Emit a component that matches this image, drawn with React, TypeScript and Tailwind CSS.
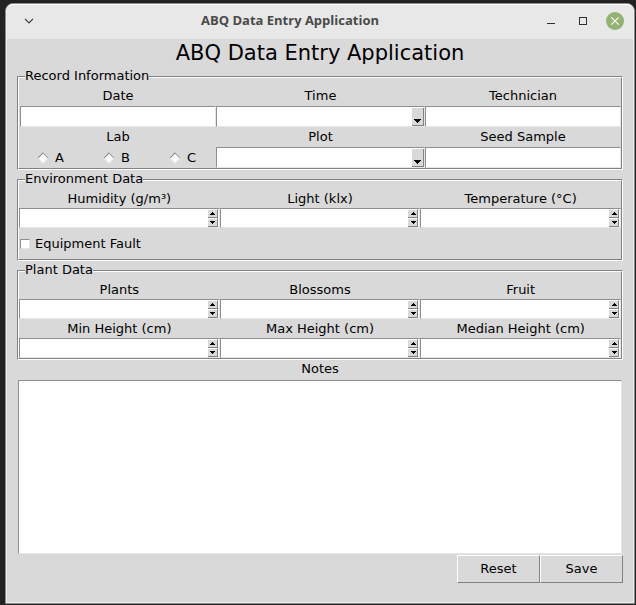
import { useId, useState } from "react";
import type { ReactNode } from "react";

const sunken =
  "border border-t-[#8f8f8f] border-l-[#8f8f8f] border-r-[#e6e6e6] border-b-[#e6e6e6] bg-white";
const raised =
  "border border-t-white border-l-white border-r-[#828282] border-b-[#828282]";

function Group({ title, children }: { title: string; children: ReactNode }) {
  return (
    <fieldset className="min-w-0 border border-t-[#828282] border-l-[#828282] border-r-white border-b-white">
      <legend className="relative z-10 ml-[7px] h-[17px] bg-[#d9d9d9] leading-[15px]">{title}</legend>
      <div className="-mt-2 border border-t-white border-l-white border-r-[#828282] border-b-[#828282] pt-2">
        {children}
      </div>
    </fieldset>
  );
}

function TextField({ label }: { label: string }) {
  const id = useId();
  return (
    <div className="min-w-0">
      <label htmlFor={id} className="block text-center leading-5">
        {label}
      </label>
      <input id={id} type="text" className={`block h-[21px] w-full px-1 outline-none ${sunken}`} />
    </div>
  );
}

function ComboField({ label, options }: { label: string; options: string[] }) {
  const id = useId();
  return (
    <div className="min-w-0">
      <label htmlFor={id} className="block text-center leading-5">
        {label}
      </label>
      <div className="relative">
        <select
          id={id}
          defaultValue=""
          className={`block h-[21px] w-full appearance-none px-1 outline-none ${sunken}`}
        >
          <option value=""></option>
          {options.map((o) => (
            <option key={o}>{o}</option>
          ))}
        </select>
        <span className="pointer-events-none absolute top-0.5 right-px bottom-px flex w-3 items-end justify-center border-r border-b border-[#828282] bg-[#d9d9d9] pb-0.5">
          <svg width="7" height="4" viewBox="0 0 7 4" shapeRendering="crispEdges">
            <path d="M0 0H7V1H6V2H5V3H4V4H3V3H2V2H1V1H0Z" />
          </svg>
        </span>
      </div>
    </div>
  );
}

function SpinField({ label, step = 1 }: { label: string; step?: number }) {
  const id = useId();
  const [value, setValue] = useState("");
  const bump = (d: number) => setValue(String(Number(value || 0) + d * step));
  const button =
    "flex h-[9px] w-2.5 items-center justify-center border-t border-r border-b border-t-white border-r-[#828282] border-b-[#828282] bg-[#d9d9d9] pl-px";
  return (
    <div className="min-w-0">
      <label htmlFor={id} className="block text-center leading-[19px]">
        {label}
      </label>
      <div className={`flex h-5 ${sunken}`}>
        <input
          id={id}
          type="text"
          inputMode="decimal"
          value={value}
          onChange={(e) => setValue(e.target.value)}
          className="min-w-0 flex-1 px-1 outline-none"
        />
        <div className="mr-px flex flex-col">
          <button type="button" aria-label={`Increase ${label}`} className={button} onClick={() => bump(1)}>
            <svg width="5" height="3" viewBox="0 0 5 3" shapeRendering="crispEdges">
              <path d="M2 0H3V1H4V2H5V3H0V2H1V1H2Z" />
            </svg>
          </button>
          <button type="button" aria-label={`Decrease ${label}`} className={button} onClick={() => bump(-1)}>
            <svg width="5" height="3" viewBox="0 0 5 3" shapeRendering="crispEdges">
              <path d="M0 0H5V1H4V2H3V3H2V2H1V1H0Z" />
            </svg>
          </button>
        </div>
      </div>
    </div>
  );
}

function LabField() {
  const [lab, setLab] = useState("");
  return (
    <div role="radiogroup" aria-labelledby="lab-label">
      <div id="lab-label" className="text-center leading-5">
        Lab
      </div>
      <div className="grid h-[21px] grid-cols-[66px_66px_1fr] items-center">
        {["A", "B", "C"].map((name) => (
          <label key={name} className="flex items-center gap-2 pl-[19px]">
            <input
              type="radio"
              name="lab"
              checked={lab === name}
              onChange={() => setLab(name)}
              className="size-2 rotate-45 appearance-none border border-t-[#9a9a9a] border-l-[#828282] border-r-[#e6e6e6] border-b-[#e6e6e6] bg-white checked:bg-[#4a6984]"
            />
            {name}
          </label>
        ))}
      </div>
    </div>
  );
}

export default function App() {
  return (
    <div className="flex min-h-screen bg-[#222222] pt-[3px] pr-px pb-px pl-[5px] font-['DejaVu_Sans',sans-serif] text-[13px] text-black">
      <main className="flex min-w-0 flex-1 flex-col rounded-t-lg border border-[#8c8c8c] bg-[#d9d9d9]">
        <header className="flex h-[35px] items-center rounded-t-[7px] border-t border-r border-l border-t-white border-r-[#ececec] border-l-[#ececec] bg-[#e8e8e8] pb-0.5">
          <div className="flex w-[90px] pl-[17px]">
            <button type="button" aria-label="Window menu">
              <svg width="10" height="6" viewBox="0 0 10 6" fill="none" stroke="#3c3c3c" strokeWidth="1.2">
                <path d="M1 .8L5 4.8L9 .8" />
              </svg>
            </button>
          </div>
          <div className="flex-1 text-center font-['Open_Sans',sans-serif] text-[13px] font-bold text-[#4a4a4a]">
            ABQ Data Entry Application
          </div>
          <div className="flex w-[150px] items-center justify-end pr-[9px]">
            <button type="button" aria-label="Minimize" className="mr-6">
              <svg width="8" height="8" viewBox="0 0 8 8" shapeRendering="crispEdges">
                <path d="M0 6H8V7H0Z" fill="#303030" />
              </svg>
            </button>
            <button type="button" aria-label="Maximize" className="mr-[19px]">
              <svg width="8" height="8" viewBox="0 0 8 8" shapeRendering="crispEdges">
                <path d="M.5 .5H7.5V7.5H.5Z" fill="none" stroke="#303030" />
              </svg>
            </button>
            <button type="button" aria-label="Close">
              <svg width="18" height="18" viewBox="0 0 18 18">
                <circle cx="9" cy="9" r="9" fill="#92b372" />
                <path d="M5.3 5.3L12.7 12.7M12.7 5.3L5.3 12.7" stroke="#fff" strokeWidth="1.2" />
              </svg>
            </button>
          </div>
        </header>
        <form
          className="flex flex-1 flex-col border-r border-b border-l border-[#ececec] px-2.5 pb-[19px]"
          onSubmit={(e) => e.preventDefault()}
        >
          <h1 className="h-[29px] text-center text-[21px] leading-7">ABQ Data Entry Application</h1>
          <div className="flex flex-col gap-px">
            <Group title="Record Information">
              <div className="grid grid-cols-[196fr_209fr_196fr] pl-px">
                <TextField label="Date" />
                <ComboField label="Time" options={["8:00", "12:00", "16:00", "20:00"]} />
                <TextField label="Technician" />
                <LabField />
                <ComboField label="Plot" options={["1", "2", "3", "4", "5"]} />
                <TextField label="Seed Sample" />
              </div>
            </Group>
            <Group title="Environment Data">
              <div className="grid grid-cols-3">
                <SpinField label="Humidity (g/m³)" step={0.01} />
                <SpinField label="Light (klx)" step={0.01} />
                <SpinField label="Temperature (°C)" step={0.01} />
              </div>
              <label className="flex h-[31px] items-center gap-[5px] pl-px">
                <input
                  type="checkbox"
                  className={`size-2.5 appearance-none checked:bg-[#4a6984] ${sunken}`}
                />
                Equipment Fault
              </label>
            </Group>
            <Group title="Plant Data">
              <div className="grid grid-cols-3">
                <SpinField label="Plants" />
                <SpinField label="Blossoms" />
                <SpinField label="Fruit" />
                <SpinField label="Min Height (cm)" />
                <SpinField label="Max Height (cm)" />
                <SpinField label="Median Height (cm)" />
              </div>
            </Group>
          </div>
          <label htmlFor="notes" className="mb-0.5 block text-center leading-[18px]">
            Notes
          </label>
          <div className="flex flex-1 px-px">
            <textarea id="notes" className={`min-h-[120px] flex-1 resize-none p-1 outline-none ${sunken}`} />
          </div>
          <div className="mt-px flex justify-end">
            <button type="reset" className={`h-7 w-[83px] ${raised}`}>
              Reset
            </button>
            <button type="submit" className={`h-7 w-[83px] ${raised}`}>
              Save
            </button>
          </div>
        </form>
      </main>
    </div>
  );
}
